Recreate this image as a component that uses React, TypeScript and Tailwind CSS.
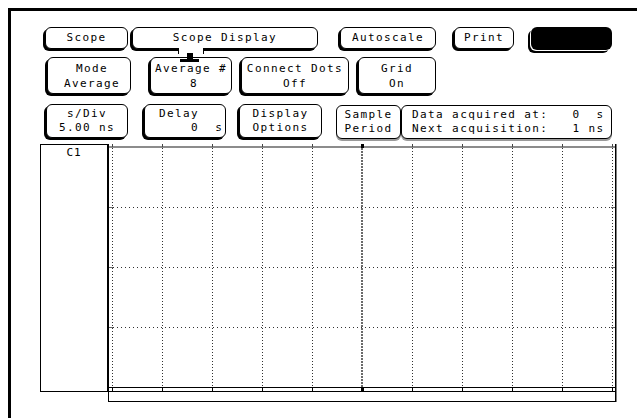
import React from 'react'

const raised =
  'relative flex flex-col items-center justify-center rounded-[6px] border border-black bg-white shadow-[-2px_2px_0_0_#000]'
const flat =
  'flex flex-col justify-center rounded-[6px] border border-black bg-white shadow-[0_2px_0_0_#9a9a9a]'

function Key({ className, children }: { className: string; children?: React.ReactNode }) {
  return <div className={`${raised} ${className}`}>{children}</div>
}

// vertical grid positions (page x)
const cols = [112, 162, 212, 262, 312, 362, 412, 462, 512, 562, 612]
const rows = [207, 267, 327]
const X = (gx: number) => gx - 107
const Y = (gy: number) => gy - 144

function Graticule() {
  return (
    <svg width={511} height={258} className="block">
      {/* left heavy edge */}
      <rect x={0} y={0} width={2} height={247} fill="#000" />
      {/* top edge */}
      <rect x={2} y={2} width={506} height={2} fill="#8c8c8c" />
      {/* right edge */}
      <rect x={508} y={0} width={1.5} height={258} fill="#000" />
      {/* bottom edges */}
      <rect x={2} y={Y(387)} width={506} height={1} fill="#000" />
      <rect x={0} y={Y(391)} width={509} height={1} fill="#000" />
      <rect x={1} y={Y(391)} width={1} height={10} fill="#000" />
      <rect x={1} y={Y(401)} width={508} height={1} fill="#000" />

      {cols.map((c) =>
        c === 362 ? (
          <g key={c}>
            <rect x={X(361)} y={0} width={3} height={4} fill="#000" />
            <line x1={X(362)} y1={4} x2={X(362)} y2={Y(387)} stroke="#6a6a6a" strokeWidth={2} strokeDasharray="2 1" />
            <rect x={X(361)} y={Y(388)} width={3} height={3} fill="#000" />
          </g>
        ) : (
          <g key={c}>
            <rect x={X(c)} y={0} width={1} height={3} fill="#444" />
            <line x1={X(c) + 0.5} y1={4} x2={X(c) + 0.5} y2={Y(387)} stroke="#333" strokeWidth={1} strokeDasharray="1 2" />
            <rect x={X(c)} y={Y(388)} width={1} height={3} fill="#000" />
          </g>
        )
      )}

      {rows.map((r) => (
        <g key={r}>
          <line x1={2} y1={Y(r) + 0.5} x2={508} y2={Y(r) + 0.5} stroke="#333" strokeWidth={1} strokeDasharray="1 3" />
          <rect x={2} y={Y(r)} width={4} height={1} fill="#666" />
          <rect x={504} y={Y(r)} width={4} height={1} fill="#666" />
        </g>
      ))}
    </svg>
  )
}

export default function App() {
  return (
    <div className="w-[637px] h-[418px] overflow-hidden bg-white pl-[8px] pt-[8px] text-black font-['DejaVu_Sans_Mono',monospace] text-[11px] tracking-[1.4px]">
      <div className="h-full border-l-[3px] border-t-[3px] border-black">
        {/* row 1 */}
        <div className="mt-[16px] flex h-[22px] items-start">
          <Key className="ml-[34px] w-[83px] h-[22px] pt-[1px]">Scope</Key>
          <Key className="z-10 ml-[4px] w-[186px] h-[22px] pt-[1px]">
            Scope Display
            <div className="absolute left-[45px] top-[20px] h-[6px] w-[26px] border-x border-black bg-white" />
            <div className="absolute left-[54px] top-[25px] h-[6px] w-[6px] bg-black" />
            <div className="absolute left-[47px] top-[31px] h-[3px] w-[19px] bg-black" />
          </Key>
          <Key className="ml-[22px] w-[96px] h-[22px] pt-[1px]">Autoscale</Key>
          <Key className="ml-[18px] w-[60px] h-[22px] pt-[1px]">Print</Key>
          <div className="ml-[17px] h-[23px] w-[81px] rounded-[6px] bg-black shadow-[-1px_1px_0_0_#fff,-3px_3px_0_0_#000]" />
        </div>

        {/* row 2 */}
        <div className="mt-[8px] flex h-[37px] items-start leading-[15px]">
          <Key className="ml-[36px] w-[84px] h-[37px] pl-[6px]">
            <span>Mode</span>
            <span>Average</span>
          </Key>
          <Key className="ml-[19px] w-[82px] h-[37px]">
            <span>Average #</span>
            <span className="pl-[6px]">8</span>
          </Key>
          <Key className="ml-[9px] w-[108px] h-[37px]">
            <span>Connect Dots</span>
            <span>Off</span>
          </Key>
          <Key className="ml-[9px] w-[78px] h-[37px]">
            <span>Grid</span>
            <span>On</span>
          </Key>
        </div>

        {/* row 3 */}
        <div className="mt-[10px] flex h-[34px] items-start leading-[14px]">
          <Key className="ml-[35px] w-[82px] h-[34px]">
            <span>s/Div</span>
            <span>5.00 ns</span>
          </Key>
          <Key className="ml-[16px] w-[82px] h-[34px] !items-start pl-[14px] whitespace-pre">
            <span>Delay</span>
            <span>{'    0  s'}</span>
          </Key>
          <Key className="ml-[13px] w-[83px] h-[34px]">
            <span>Display</span>
            <span>Options</span>
          </Key>
          <div className={`${flat} ml-[14px] mt-[1px] h-[34px] w-[65px] items-center`}>
            <span>Sample</span>
            <span>Period</span>
          </div>
          <div className={`${flat} mt-[1px] h-[34px] w-[211px] items-start whitespace-pre pl-[10px]`}>
            <span>{'Data acquired at:   0  s'}</span>
            <span>{'Next acquisition:   1 ns'}</span>
          </div>
        </div>

        {/* waveform area */}
        <div className="mt-[6px] flex items-start">
          <div className="ml-[29px] h-[248px] w-[67px] border-y border-l border-black pt-[2px] text-center leading-[12px] tracking-[1px]">
            C1
          </div>
          <Graticule />
        </div>
      </div>
    </div>
  )
}
